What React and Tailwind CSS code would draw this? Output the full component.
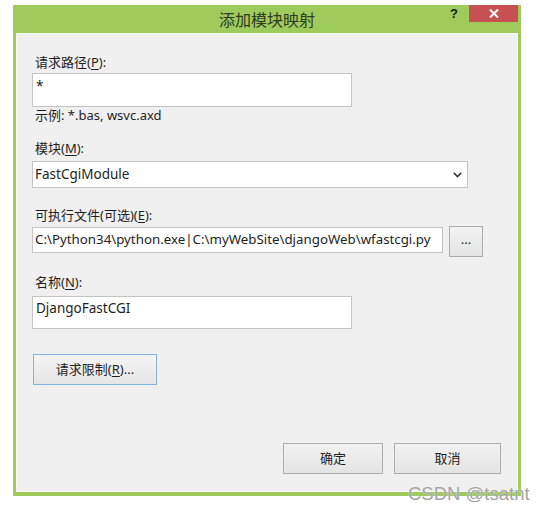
import React from "react";

const font = { fontFamily: '"Noto Sans", "Noto Sans CJK SC", sans-serif' };

function U({ children }) {
  return <span className="underline underline-offset-2">{children}</span>;
}

function Label({ children, className = "" }) {
  return (
    <div className={`ml-[18px] text-[13px] leading-[16px] text-[#1e1e1e] ${className}`}>
      {children}
    </div>
  );
}

function Btn({ children, className = "" }) {
  return (
    <div
      className={`flex items-center justify-center border border-[#adadad] bg-gradient-to-b from-[#f2f2f2] to-[#e4e4e4] text-[13px] text-[#1e1e1e] ${className}`}
    >
      {children}
    </div>
  );
}

export default function App() {
  return (
    <div className="relative h-[511px] w-[547px] overflow-hidden bg-white" style={font}>
      <div className="ml-[13px] mt-[5px] flex h-[491px] w-[508px] flex-col bg-[#9fca5c]">
        {/* title bar */}
        <div className="relative flex h-[28px] shrink-0 justify-center">
          <div className="mt-[3px] text-[16px] leading-[22px] text-[#2f3a22]" style={{ fontFamily: '"Noto Sans CJK SC", sans-serif' }}>
            添加模块映射
          </div>
          <div className="absolute left-[437px] top-[0px] text-[13px] font-bold leading-[18px] text-[#1a1a1a]" style={{ fontFamily: '"Liberation Sans", sans-serif' }}>
            ?
          </div>
          <div className="absolute right-[3px] top-0 flex h-[17px] w-[49px] items-center justify-center bg-[#c75050]">
            <svg width="10" height="9" viewBox="0 0 10 9">
              <path d="M1 0.5 L9 8.5 M9 0.5 L1 8.5" stroke="#ffffff" strokeWidth="2" />
            </svg>
          </div>
        </div>
        {/* content */}
        <div className="mx-[3px] mb-[4px] flex-1 border border-[#f8f8f8] bg-[#f0f0f0]">
          <Label className="mt-[20px]">
            请求路径(<U>P</U>):
          </Label>
          <div className="ml-[15px] mt-[3px] h-[34px] w-[320px] border border-[#c4c4c4] bg-white px-[3px] pt-[3px] text-[13.5px] leading-[18px] text-[#1e1e1e]">
            *
          </div>
          <Label>示例: *.bas, wsvc.axd</Label>
          <Label className="mt-[17px]">
            模块(<U>M</U>):
          </Label>
          <div className="ml-[15px] mt-[5px] flex h-[27px] w-[436px] items-center justify-between border border-[#c4c4c4] bg-white pl-[2px] pr-[5px] text-[13.5px] text-[#1e1e1e]">
            <span>FastCgiModule</span>
            <svg width="9" height="6" viewBox="0 0 9 6">
              <path d="M0.8 0.8 L4.5 4.5 L8.2 0.8" fill="none" stroke="#333" strokeWidth="1.6" />
            </svg>
          </div>
          <Label className="mt-[19px]">
            可执行文件(可选)(<U>E</U>):
          </Label>
          <div className="ml-[15px] mt-[3px] flex items-start gap-[6px]">
            <div className="mt-[1px] flex h-[26px] w-[411px] items-center overflow-hidden whitespace-nowrap border border-[#c4c4c4] bg-white pl-[2px] text-[13.3px] text-[#1e1e1e]">
              C:\Python34\python.exe|C:\myWebSite\djangoWeb\wfastcgi.py
            </div>
            <Btn className="h-[31px] w-[34px] pb-[3px]">...</Btn>
          </div>
          <Label className="mt-[17px]">
            名称(<U>N</U>):
          </Label>
          <div className="ml-[15px] mt-[6px] h-[33px] w-[320px] border border-[#c4c4c4] bg-white px-[3px] pt-[2px] text-[13.5px] leading-[18px] text-[#1e1e1e]">
            DjangoFastCGI
          </div>
          <div className="ml-[16px] mt-[25px] flex h-[31px] w-[124px] items-center justify-center border border-[#7eb4ea] bg-gradient-to-b from-[#f4f4f4] to-[#e6e6e6] text-[13px] text-[#1e1e1e]">
            请求限制(<U>R</U>)...
          </div>
          <div className="mt-[58px] flex gap-[11px] pl-[266px]">
            <Btn className="h-[31px] w-[100px]">确定</Btn>
            <Btn className="h-[31px] w-[107px]">取消</Btn>
          </div>
        </div>
      </div>
      <div
        className="absolute left-[408px] top-[483px] text-[18.5px] leading-[22px] text-[#a3a3a3]"
        style={{ fontFamily: '"Liberation Sans", sans-serif', textShadow: "0 0 1px #fff" }}
      >
        CSDN @tsatnt
      </div>
    </div>
  );
}
